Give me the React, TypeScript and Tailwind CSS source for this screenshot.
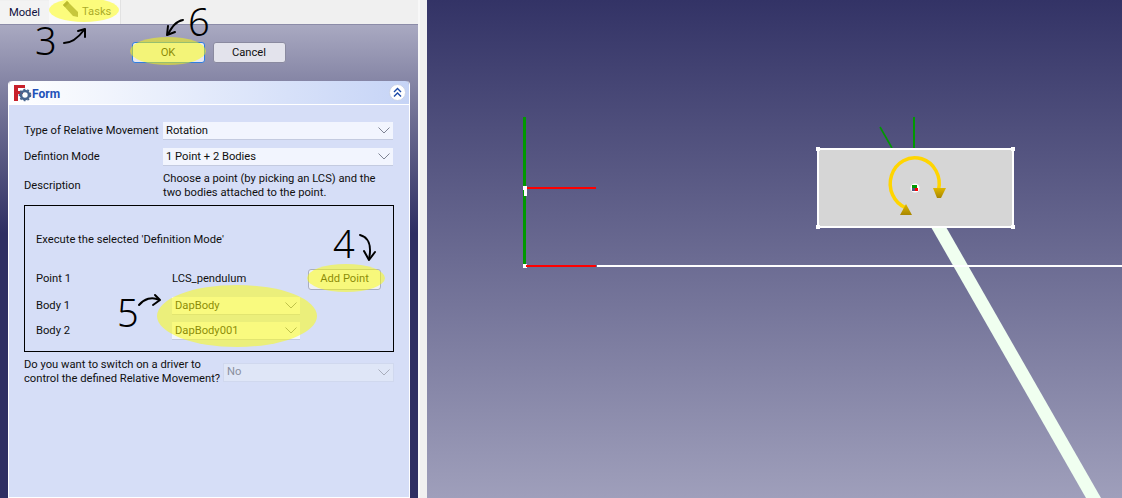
const font = "font-['Roboto','Liberation_Sans',sans-serif]";
const digit = "font-['Noto_Sans','Liberation_Sans',sans-serif] font-light";

function Chevron({ color = "#7f8494" }: { color?: string }) {
  return (
    <svg width="12" height="7" viewBox="0 0 12 7" fill="none" className="shrink-0">
      <path d="M0.5 0.5 L6 6 L11.5 0.5" stroke={color} strokeWidth="1" />
    </svg>
  );
}

function Combo({ label, className, disabled }: { label: string; className: string; disabled?: boolean }) {
  return (
    <div
      className={`flex items-center justify-between pl-[3px] pr-[3px] ${
        disabled
          ? "bg-[#dfe6f7] text-[#8a8f9e] border border-[#d0d8ee]"
          : "bg-[#f2f5fe] text-[#101010] border-b border-b-[#c4cbe0]"
      } ${className}`}
    >
      <span>{label}</span>
      <Chevron color={disabled ? "#a8adbb" : "#7f8494"} />
    </div>
  );
}

function Tabs() {
  return (
    <div className="flex h-6 items-end bg-[#f0f0f0]">
      <div className="flex h-[23px] w-[49px] items-center justify-center bg-[#f3f3f3] text-[#101040]">Model</div>
      <div className="flex h-6 w-[72px] items-center gap-[1px] border-r border-r-[#e2e2e2] bg-[#f9f9f9] pl-3 text-[#555]">
        <svg width="18" height="16" viewBox="0 0 18 16" className="shrink-0 -translate-y-[3px]">
          <path d="M2 4 L6 0 L17 11 L17 16 L12 15 Z" fill="#8f8f78" />
          <path d="M2 4 L6 0 L8 2 L4 6 Z" fill="#77775f" />
        </svg>
        <span className="ml-[2px]">Tasks</span>
      </div>
    </div>
  );
}

function FormHeader() {
  return (
    <div className="flex h-6 items-center justify-between rounded-t-[4px] border-b border-b-white bg-gradient-to-r from-white to-[#c6d4f6] pr-[3px] pl-[5px]">
      <div className="flex items-center">
        <svg width="18" height="18" viewBox="0 0 18 18">
          <path d="M0 1 H11 V4 H4 V7 H9 V10 H4 V17 H0 Z" fill="#c8202a" />
          <circle cx="11" cy="11" r="4" fill="none" stroke="#46648f" strokeWidth="2.6" />
          <circle cx="11" cy="11" r="5.6" fill="none" stroke="#46648f" strokeWidth="1.4" strokeDasharray="2 2" />
        </svg>
        <span className="translate-y-[1px] text-[12px] font-bold text-[#2250b8]">Form</span>
      </div>
      <div className="flex h-[17px] w-[17px] items-center justify-center rounded-full border border-[#c9d3ea] bg-white">
        <svg width="11" height="11" viewBox="0 0 11 11" fill="none" stroke="#1c4aa8" strokeWidth="1.4">
          <path d="M2 5 L5.5 1.5 L9 5" />
          <path d="M2 9.5 L5.5 6 L9 9.5" />
        </svg>
      </div>
    </div>
  );
}

function FormBody() {
  return (
    <div className="flex-1 whitespace-nowrap bg-[#d6def7] px-[15px] pt-[17px] text-[#101010]">
      <div className="grid grid-cols-[139px_230px] gap-y-2 items-center">
        <span>Type of Relative Movement</span>
        <Combo label="Rotation" className="h-[18px]" />
        <span>Defintion Mode</span>
        <Combo label="1 Point + 2 Bodies" className="h-[18px]" />
        <span className="mb-[3px]">Description</span>
        <p className="leading-[14px] -mt-[2px]">
          Choose a point (by picking an LCS) and the
          <br />
          two bodies attached to the point.
        </p>
      </div>
      <div className="mt-[5px] h-[147px] w-[370px] border border-black px-[11px] pt-[26px]">
        <div>Execute the selected 'Definition Mode'</div>
        <div className="mt-[20px] grid grid-cols-[136px_128px_81px] grid-rows-[22px_18px_18px] gap-y-[7px] items-center">
          <span>Point 1</span>
          <span>LCS_pendulum</span>
          <div className="ml-[8px] flex h-[21px] w-[73px] items-center justify-center rounded-[3px] border border-[#a9aec0] bg-[#eef0f7]">
            Add Point
          </div>
          <span>Body 1</span>
          <Combo label="DapBody" className="h-[18px]" />
          <span />
          <span>Body 2</span>
          <Combo label="DapBody001" className="h-[18px]" />
        </div>
      </div>
      <div className="mt-[6px] grid grid-cols-[199px_171px] items-center">
        <p className="leading-[14px]">
          Do you want to switch on a driver to
          <br />
          control the defined Relative Movement?
        </p>
        <Combo label="No" disabled className="h-[19px]" />
      </div>
    </div>
  );
}

// yellow highlights and hand-drawn arrows lying over the panel
function Annotations() {
  return (
    <>
      <svg width="418" height="498" viewBox="0 0 418 498" className="pointer-events-none absolute top-0 left-0" fill="none">
        <g fill="#ffff00" fillOpacity="0.5">
          <ellipse cx="84" cy="10" rx="35" ry="12" />
          <ellipse cx="168" cy="51" rx="38" ry="14" />
          <ellipse cx="346" cy="278" rx="39" ry="14" />
          <ellipse cx="237" cy="316" rx="80" ry="31" />
        </g>
        <g stroke="#000" strokeWidth="2" strokeLinecap="round" strokeLinejoin="round">
          <path d="M64 43 C72 43 78 38 84 30" />
          <path d="M78 31 L85 29 L85 37" />
          <path d="M183 20 C176 21 172 27 168 34" />
          <path d="M168 26 L167 35 L175 32" />
          <path d="M360 235 C368 237 372 245 369 259" />
          <path d="M364 251 L369 260 L375 252" />
          <path d="M139 305 C144 299 152 296 159 300" />
          <path d="M155 295 L160 300 L153 305" />
        </g>
      </svg>
      <span className={`absolute top-[21px] left-[35px] text-[38px] leading-[38px] text-black ${digit}`}>3</span>
      <span className={`absolute top-[2px] left-[188px] text-[38px] leading-[38px] text-black ${digit}`}>6</span>
      <span className={`absolute top-[224px] left-[333px] text-[38px] leading-[38px] text-black ${digit}`}>4</span>
      <span className={`absolute top-[293px] left-[117px] text-[38px] leading-[38px] text-black ${digit}`}>5</span>
    </>
  );
}

function TaskPanel() {
  return (
    <div className="relative flex w-[418px] shrink-0 flex-col">
      <Tabs />
      <div className="flex flex-1 flex-col border-t border-t-[#8c8ca8] bg-[linear-gradient(180deg,#a9a9c1_0%,#6d6d92_20%,#2f2f63_44%,#2f2f63_100%)] px-2">
        <div className="flex h-[56px] shrink-0 items-start justify-center gap-2 pt-[17px] pr-[1px]">
          <div className="flex h-[21px] w-[73px] items-center justify-center rounded-[3px] border border-[#2f7ee0] bg-[#e7e8f0] text-[#101010]">
            OK
          </div>
          <div className="flex h-[21px] w-[73px] items-center justify-center rounded-[3px] border border-[#8a8aa0] bg-[#e3e3ec] text-[#101010]">
            Cancel
          </div>
        </div>
        <div className="flex flex-1 flex-col border-x border-b border-white rounded-t-[4px]">
          <FormHeader />
          <FormBody />
        </div>
      </div>
      <Annotations />
    </div>
  );
}

function Viewport() {
  return (
    <div className="relative flex-1 bg-[linear-gradient(180deg,#333366_0%,#9f9fbb_100%)]">
      <svg width="695" height="498" viewBox="427 0 695 498" className="absolute inset-0">
        <defs>
          <linearGradient id="head" x1="0" y1="0" x2="0" y2="1">
            <stop offset="0" stopColor="#e0b800" />
            <stop offset="1" stopColor="#a88600" />
          </linearGradient>
        </defs>
        <polygon points="931,227 946,227 1101,498 1086,498" fill="#f0fff0" />
        <rect x="597" y="265" width="525" height="2" fill="#ffffff" />
        <rect x="523" y="117" width="3" height="148" fill="#009900" />
        <rect x="524" y="186" width="3" height="10" fill="#ffffff" />
        <rect x="523" y="186" width="4" height="4" fill="#ffffff" />
        <rect x="527" y="187" width="69" height="2" fill="#ff0000" />
        <rect x="523" y="264" width="4" height="4" fill="#ffffff" />
        <rect x="526" y="265" width="70" height="2" fill="#ff0000" />
        <rect x="913" y="117" width="2" height="32" fill="#009900" />
        <line x1="880" y1="127" x2="892" y2="148" stroke="#009900" strokeWidth="1.6" />
        <rect x="818" y="149" width="195" height="78" fill="#d6d6d6" stroke="#ffffff" strokeWidth="2" />
        <rect x="816" y="147" width="4" height="4" fill="#fff" />
        <rect x="1011" y="147" width="4" height="4" fill="#fff" />
        <rect x="816" y="225" width="4" height="4" fill="#fff" />
        <rect x="1011" y="225" width="4" height="4" fill="#fff" />
        <path d="M938.5 190 A24.5 26 0 1 0 906 208" fill="none" stroke="#ffd500" strokeWidth="3.5" />
        <polygon points="933,188 946,188 941,198 937,198" fill="url(#head)" />
        <polygon points="906,204 912,215 900,215" fill="url(#head)" />
        <circle cx="915" cy="188" r="4.5" fill="#fff" />
        <rect x="912" y="185" width="5" height="3" fill="#009900" />
        <rect x="912" y="188" width="3" height="3" fill="#55557f" />
        <rect x="915" y="188" width="3" height="3" fill="#ff0000" />
      </svg>
    </div>
  );
}

export default function App() {
  return (
    <div className={`flex h-[498px] w-[1122px] overflow-hidden bg-[#f0f0f0] text-[11.2px] leading-[16px] ${font}`}>
      <TaskPanel />
      <div className="w-[9px] shrink-0 border-l-2 border-l-[#f8f8f8]" />
      <Viewport />
    </div>
  );
}
